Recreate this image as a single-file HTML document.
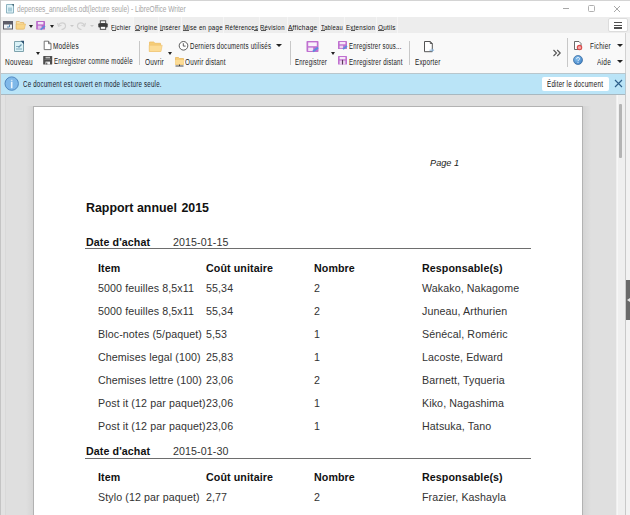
<!DOCTYPE html>
<html><head><meta charset="utf-8">
<style>
*{margin:0;padding:0;box-sizing:border-box}
html,body{width:630px;height:515px;overflow:hidden;background:#f0f0f0;font-family:"Liberation Sans",sans-serif}
.a{position:absolute;white-space:nowrap}
.ui{font-size:8.4px;color:#222;line-height:10px;transform-origin:0 0;letter-spacing:0.3px}
.doc{font-size:10.67px;color:#333;line-height:12px;letter-spacing:0.1px}
.b{font-weight:bold;color:#111}
</style></head><body>
<!-- window frame -->
<div class="a" style="left:0;top:0;width:630px;height:515px;background:#f0f0f0"></div>
<!-- title bar -->
<div class="a" style="left:0;top:0;width:630px;height:17px;background:#ffffff"></div>
<div class="a" style="left:0;top:0;width:630px;height:1px;background:#d4d4d4"></div>
<div class="a" style="left:0;top:0;width:1px;height:515px;background:#c4c4c4"></div>
<svg class="a" style="left:5px;top:3px" width="10" height="11" viewBox="0 0 10 11"><path d="M1.5 1.5h5.5l1.5 1.5v7h-7z" fill="#dff2f8" stroke="#8db3c0" stroke-width="1"/><rect x="3" y="4.5" width="4" height="4" fill="#a9cdd9"/><path d="M6.5 1h2.5v2.5z" fill="#4d6f7d"/></svg>
<div class="a" style="left:17px;top:3.6px;font-size:8.4px;color:#a6a6a6;line-height:10px;transform:scaleX(0.78);transform-origin:0 0">depenses_annuelles.odt(lecture seule) - LibreOffice Writer</div>
<!-- window controls -->
<div class="a" style="left:563px;top:8px;width:6px;height:1px;background:#a8a8a8"></div>
<div class="a" style="left:588px;top:5px;width:7px;height:7px;border:1px solid #b0b0b0;border-radius:1.5px"></div>
<svg class="a" style="left:613px;top:5px" width="8" height="8" viewBox="0 0 8 8"><path d="M1 1l6 6M7 1l-6 6" stroke="#a8a8a8" stroke-width="1"/></svg>

<!-- menubar -->
<div class="a" style="left:1px;top:17px;width:629px;height:16px;background:#ededed"></div>
<div class="a" style="left:109px;top:17px;width:25px;height:16px;background:#f3f3f3"></div>
<!-- quick icons -->
<svg class="a" style="left:3px;top:21px" width="10" height="9" viewBox="0 0 10 9"><rect x="0.5" y="0.5" width="9" height="7.5" fill="#eef3f6" stroke="#5d5d68"/><rect x="0.5" y="0.5" width="9" height="3" fill="#5d5d68"/><path d="M6.5 3.5v2.5h-2.5" stroke="#5a86b0" stroke-width="1" fill="none"/></svg>
<svg class="a" style="left:15px;top:20px" width="11" height="10" viewBox="0 0 11 10"><path d="M1.3 1.5h3l1 1h3.4v6.5h-7.4z" fill="#f9e2aa" stroke="#e2b466" stroke-width="0.8"/><path d="M1.2 4h9.3l-1.2 5h-8.1z" fill="#f9d68a" stroke="#e6b868" stroke-width="0.6"/></svg>
<div class="a" style="left:29px;top:25px;border-left:2.5px solid transparent;border-right:2.5px solid transparent;border-top:3px solid #222"></div>
<svg class="a" style="left:36px;top:21px" width="10" height="10" viewBox="0 0 10 10"><rect x="0.2" y="0" width="8.8" height="8.6" rx="0.6" fill="#b865c8"/><rect x="1.8" y="1" width="5.6" height="2.4" fill="#f4e2f7"/><rect x="1.8" y="4.6" width="3.8" height="3.2" fill="#e2c2ea"/><path d="M4.6 8.6l4.4-3.6" stroke="#5a8fdc" stroke-width="1.6"/></svg>
<div class="a" style="left:49.5px;top:25px;border-left:2.5px solid transparent;border-right:2.5px solid transparent;border-top:3px solid #222"></div>
<svg class="a" style="left:57px;top:21px" width="10" height="9" viewBox="0 0 10 9"><path d="M1.5 4.5C3 1 8 1 8.5 4.5 8.8 6.5 7 8.5 4.5 8.5" stroke="#d0d0d0" fill="none" stroke-width="1.2"/><path d="M0.5 2l1 3.2 3-1" stroke="#d0d0d0" fill="none" stroke-width="1.2"/></svg>
<div class="a" style="left:70px;top:25px;border-left:2.5px solid transparent;border-right:2.5px solid transparent;border-top:2.5px solid #c8c8c8"></div>
<svg class="a" style="left:76px;top:21px" width="10" height="9" viewBox="0 0 10 9"><path d="M8.5 4.5C7 1 2 1 1.5 4.5 1.2 6.5 3 8.5 5.5 8.5" stroke="#d0d0d0" fill="none" stroke-width="1.2"/><path d="M9.5 2l-1 3.2-3-1" stroke="#d0d0d0" fill="none" stroke-width="1.2"/></svg>
<div class="a" style="left:90px;top:25px;border-left:2.5px solid transparent;border-right:2.5px solid transparent;border-top:2.5px solid #c8c8c8"></div>
<svg class="a" style="left:98px;top:20px" width="10" height="10" viewBox="0 0 10 10"><rect x="2.3" y="0.8" width="5.4" height="2.6" fill="#fff" stroke="#444" stroke-width="0.9"/><rect x="0.3" y="3.2" width="9.4" height="4.3" rx="1" fill="#3c3c3c"/><rect x="2.3" y="6.3" width="5.4" height="3" fill="#fff" stroke="#3c3c3c" stroke-width="0.9"/></svg>
<div class="a" style="left:133px;top:17px;width:1px;height:16px;background:#f5f5f5"></div>
<div class="a" style="left:158px;top:17px;width:1px;height:16px;background:#f5f5f5"></div>
<div class="a" style="left:181px;top:17px;width:1px;height:16px;background:#f5f5f5"></div>
<div class="a" style="left:223px;top:17px;width:1px;height:16px;background:#f5f5f5"></div>
<div class="a" style="left:259px;top:17px;width:1px;height:16px;background:#f5f5f5"></div>
<div class="a" style="left:287px;top:17px;width:1px;height:16px;background:#f5f5f5"></div>
<div class="a" style="left:319px;top:17px;width:1px;height:16px;background:#f5f5f5"></div>
<div class="a" style="left:344px;top:17px;width:1px;height:16px;background:#f5f5f5"></div>
<div class="a" style="left:376px;top:17px;width:1px;height:16px;background:#f5f5f5"></div>
<div class="a" style="left:397px;top:17px;width:1px;height:16px;background:#f5f5f5"></div>
<!-- menu texts -->
<div class="a ui" style="left:111.10px;top:22.57px;color:#111;transform:scaleX(0.797);font-size:7.6px">Fichier</div>
<div class="a ui" style="left:134.69px;top:22.57px;color:#111;transform:scaleX(0.848);font-size:7.6px">Origine</div>
<div class="a ui" style="left:159.64px;top:22.57px;color:#111;transform:scaleX(0.792);font-size:7.6px">Insérer</div>
<div class="a ui" style="left:182.50px;top:22.57px;color:#111;transform:scaleX(0.809);font-size:7.6px">Mise en page</div>
<div class="a ui" style="left:225.10px;top:22.57px;color:#111;transform:scaleX(0.794);font-size:7.6px">Références</div>
<div class="a ui" style="left:260.41px;top:22.57px;color:#111;transform:scaleX(0.783);font-size:7.6px">Révision</div>
<div class="a ui" style="left:288.29px;top:22.57px;color:#111;transform:scaleX(0.860);font-size:7.6px">Affichage</div>
<div class="a ui" style="left:320.67px;top:22.57px;color:#111;transform:scaleX(0.763);font-size:7.6px">Tableau</div>
<div class="a ui" style="left:345.90px;top:22.57px;color:#111;transform:scaleX(0.808);font-size:7.6px">Extension</div>
<div class="a ui" style="left:377.90px;top:22.57px;color:#111;transform:scaleX(0.838);font-size:7.6px">Outils</div>
<div class="a" style="left:111.6px;top:29.6px;width:4px;height:1px;background:#555"></div>
<div class="a" style="left:135px;top:29.6px;width:5px;height:1px;background:#555"></div>
<div class="a" style="left:160.2px;top:29.6px;width:2.5px;height:1px;background:#555"></div>
<div class="a" style="left:183px;top:29.6px;width:6px;height:1px;background:#555"></div>
<div class="a" style="left:254px;top:29.6px;width:4px;height:1px;background:#555"></div>
<div class="a" style="left:260.9px;top:29.6px;width:5px;height:1px;background:#555"></div>
<div class="a" style="left:288.3px;top:29.6px;width:5px;height:1px;background:#555"></div>
<div class="a" style="left:350.5px;top:29.6px;width:4px;height:1px;background:#555"></div>
<div class="a" style="left:320.8px;top:29.6px;width:4.5px;height:1px;background:#555"></div>
<div class="a" style="left:378.2px;top:29.6px;width:5.5px;height:1px;background:#555"></div>
<div class="a" style="left:591px;top:49px;width:4px;height:1px;background:#555"></div>
<div class="a" style="left:597.5px;top:65px;width:5px;height:1px;background:#555"></div>
<!-- hamburger -->
<div class="a" style="left:608px;top:18px;width:20px;height:14px;background:#fff;border:1px solid #dcdcdc;border-radius:2px"></div>
<div class="a" style="left:614px;top:22px;width:8px;height:1.2px;background:#505050"></div>
<div class="a" style="left:614px;top:24.7px;width:8px;height:1.2px;background:#505050"></div>
<div class="a" style="left:614px;top:27.4px;width:8px;height:1.2px;background:#505050"></div>

<!-- toolbar -->
<div class="a" style="left:1px;top:33px;width:624px;height:40px;background:#f9f9f9"></div>
<div class="a" style="left:626px;top:33px;width:4px;height:62px;background:#f3f3f3"></div>
<div class="a" style="left:1px;top:73px;width:625px;height:1px;background:#b9c6cc"></div>
<div class="a" style="left:625px;top:33px;width:1px;height:62px;background:#d2d2d2"></div>
<!-- Nouveau -->
<svg class="a" style="left:13px;top:40px" width="12" height="13" viewBox="0 0 12 13"><path d="M1.5 1.5h7.5l1.5 1.5v8.5h-9z" fill="#daf2f7" stroke="#7ea3ad" stroke-width="1"/><path d="M3 6.5h3M3 9h6" stroke="#7fa8bb" stroke-width="1.1"/><path d="M5.5 7.5l3-3" stroke="#6a95b0" stroke-width="1.3"/><path d="M7.5 0.8h3.5v3.5z" fill="#2f5474"/></svg>
<div class="a ui" style="left:5.0px;top:56.90px;color:#222;transform:scaleX(0.781)">Nouveau</div>
<div class="a" style="left:36px;top:52px;border-left:2.5px solid transparent;border-right:2.5px solid transparent;border-top:3px solid #222"></div>
<svg class="a" style="left:43px;top:40px" width="9" height="11" viewBox="0 0 9 11"><path d="M1.2 1.2h4.3l2.5 2.5v5.9h-6.8z" fill="#fff" stroke="#666" stroke-width="0.9"/><path d="M5.5 1.2v2.5h2.5" fill="none" stroke="#666" stroke-width="0.9"/></svg>
<div class="a ui" style="left:53.47px;top:41.23px;color:#222;transform:scaleX(0.765)">Modèles</div>
<svg class="a" style="left:43px;top:55px" width="10" height="10" viewBox="0 0 10 10"><rect x="0.2" y="1" width="9" height="8.5" rx="0.6" fill="#4c4c4c"/><rect x="2.5" y="1.8" width="4.5" height="1.6" fill="#bdbdbd"/><rect x="1.5" y="4.2" width="6.5" height="0.8" fill="#7a7a7a"/><rect x="2.5" y="6.6" width="4.5" height="2.9" fill="#f4f4f4"/><rect x="3.2" y="7.6" width="1.1" height="1.9" fill="#4c4c4c"/></svg>
<div class="a ui" style="left:53.50px;top:56.40px;color:#222;transform:scaleX(0.731)">Enregistrer comme modèle</div>
<div class="a" style="left:139px;top:41px;width:1px;height:24px;background:#c8c8c8"></div>
<!-- Ouvrir -->
<svg class="a" style="left:148px;top:40px" width="15" height="12" viewBox="0 0 15 12"><path d="M1.5 2h4.2l1.3 1.3h5.5v8h-11z" fill="#f6cd78" stroke="#ecbf68" stroke-width="0.8"/><path d="M1.2 5.2h13l-1.2 6.3h-11.8z" fill="#fcdc96" stroke="#f0c474" stroke-width="0.6"/></svg>
<div class="a ui" style="left:145.09px;top:56.90px;color:#222;transform:scaleX(0.772)">Ouvrir</div>
<div class="a" style="left:168px;top:52px;border-left:2.5px solid transparent;border-right:2.5px solid transparent;border-top:3px solid #222"></div>
<svg class="a" style="left:178px;top:40px" width="11" height="11" viewBox="0 0 11 11"><circle cx="5.5" cy="5.8" r="4.3" fill="#fff" stroke="#4a4a4a" stroke-width="0.9"/><path d="M5.3 3.2v2.9h2.3" stroke="#4a4a4a" stroke-width="0.9" fill="none"/></svg>
<div class="a ui" style="left:190.00px;top:40.99px;color:#222;transform:scaleX(0.732)">Derniers documents utilisés</div>
<div class="a" style="left:276px;top:44px;border-left:3px solid transparent;border-right:3px solid transparent;border-top:3.5px solid #222"></div>
<svg class="a" style="left:174px;top:56px" width="11" height="11" viewBox="0 0 11 11"><path d="M1.5 1.5h3l1 1h4v6h-8z" fill="#f6cd78" stroke="#e8b860" stroke-width="0.8"/><path d="M1.2 4h9.3l-0.9 4.5h-8.4z" fill="#fcdc96"/><path d="M5.5 8.5v1.5M1.5 10h8" stroke="#333" stroke-width="0.9"/></svg>
<div class="a ui" style="left:185.40px;top:56.90px;color:#222;transform:scaleX(0.755)">Ouvrir distant</div>
<div class="a" style="left:290px;top:41px;width:1px;height:24px;background:#c8c8c8"></div>
<!-- Enregistrer -->
<svg class="a" style="left:305px;top:40px" width="15" height="13" viewBox="0 0 15 13"><rect x="1.5" y="1" width="12" height="11" rx="0.8" fill="#c070d0"/><rect x="3.2" y="2.4" width="8.6" height="3.8" fill="#fbf2fc"/><rect x="3.2" y="7.6" width="5" height="3.4" fill="#f4e4f7"/><path d="M8 11.5l5-4" stroke="#5a8fdc" stroke-width="2"/></svg>
<div class="a ui" style="left:295.20px;top:56.90px;color:#222;transform:scaleX(0.724)">Enregistrer</div>
<div class="a" style="left:331px;top:52px;border-left:2.5px solid transparent;border-right:2.5px solid transparent;border-top:3px solid #222"></div>
<svg class="a" style="left:338px;top:41px" width="10" height="9" viewBox="0 0 10 9"><rect x="0" y="0" width="9" height="8" rx="0.6" fill="#c070d0"/><rect x="1.6" y="1" width="5.8" height="2.3" fill="#f6e6f8"/><rect x="1.6" y="4.6" width="3.5" height="2.6" fill="#ecd6f0"/><path d="M5 8l4-3" stroke="#5a8fdc" stroke-width="1.6"/></svg>
<div class="a ui" style="left:348.51px;top:40.99px;color:#222;transform:scaleX(0.714)">Enregistrer sous...</div>
<svg class="a" style="left:338px;top:56px" width="10" height="9" viewBox="0 0 10 9"><rect x="0" y="0" width="9" height="8.5" rx="0.6" fill="#c070d0"/><rect x="1.6" y="1" width="5.8" height="2.3" fill="#f6e6f8"/><rect x="1.6" y="4.6" width="5.8" height="3.9" fill="#ecd6f0"/><path d="M4.5 3.8v4.7" stroke="#5a3a5a" stroke-width="1.1"/></svg>
<div class="a ui" style="left:348.50px;top:56.90px;color:#222;transform:scaleX(0.728)">Enregistrer distant</div>
<div class="a" style="left:409px;top:41px;width:1px;height:24px;background:#c8c8c8"></div>
<!-- Exporter -->
<svg class="a" style="left:423px;top:40px" width="13" height="13" viewBox="0 0 13 13"><path d="M1.5 1.5h5.8l2 2v8.2h-7.8z" fill="#fff" stroke="#555" stroke-width="1"/><path d="M7.3 1.5v2h2" fill="none" stroke="#555" stroke-width="1"/><path d="M6.5 10.2h3.8M9 8.6l1.6 1.6-1.6 1.6" stroke="#8cb8e0" stroke-width="1" fill="none"/></svg>
<div class="a ui" style="left:415.08px;top:56.90px;color:#222;transform:scaleX(0.751)">Exporter</div>
<!-- >> -->
<svg class="a" style="left:552px;top:49px" width="10" height="8" viewBox="0 0 10 8"><path d="M1.5 1l3 3-3 3M5.2 1l3 3-3 3" stroke="#585858" stroke-width="1.15" fill="none"/></svg>
<div class="a" style="left:567px;top:38px;width:1px;height:29px;background:#c8c8c8"></div>
<svg class="a" style="left:573px;top:40px" width="10" height="11" viewBox="0 0 10 11"><path d="M1.5 1.5h4.5l2 2v6h-6.5z" fill="#fff" stroke="#5a5a5a" stroke-width="0.9"/><circle cx="6.5" cy="7.6" r="2.2" fill="#f4a8a8" stroke="#dc4c4c" stroke-width="1.1"/></svg>
<div class="a ui" style="left:590.47px;top:40.99px;color:#222;transform:scaleX(0.764)">Fichier</div>
<div class="a" style="left:617px;top:44px;border-left:3px solid transparent;border-right:3px solid transparent;border-top:3.5px solid #222"></div>
<svg class="a" style="left:573px;top:55px" width="10" height="10" viewBox="0 0 10 10"><defs><radialGradient id="hg" cx="0.4" cy="0.35" r="0.7"><stop offset="0" stop-color="#8cc4f0"/><stop offset="1" stop-color="#3d7fc4"/></radialGradient></defs><circle cx="5" cy="5" r="4.5" fill="url(#hg)" stroke="#35679c" stroke-width="0.7"/><path d="M3.6 3.8a1.5 1.4 0 1 1 2.2 1.2c-0.6 0.4-0.8 0.6-0.8 1.2" stroke="#e6f2ff" stroke-width="1" fill="none"/><circle cx="5" cy="7.6" r="0.55" fill="#e6f2ff"/></svg>
<div class="a ui" style="left:597.49px;top:56.90px;color:#222;transform:scaleX(0.779)">Aide</div>
<div class="a" style="left:617px;top:60px;border-left:3px solid transparent;border-right:3px solid transparent;border-top:3.5px solid #222"></div>

<!-- infobar -->
<div class="a" style="left:1px;top:74px;width:625px;height:20px;background:#bae4f7"></div>
<div class="a" style="left:1px;top:94px;width:625px;height:1px;background:#a8b8c0"></div>
<div class="a" style="left:625px;top:73px;width:1px;height:22px;background:#b8c8d0"></div>
<svg class="a" style="left:3.5px;top:76px" width="16" height="16" viewBox="0 0 16 16"><circle cx="7.7" cy="7.6" r="6.7" fill="#80b9e9" stroke="#5088c0" stroke-width="1"/><rect x="6.9" y="5.8" width="1.6" height="6.4" fill="#eef6fd"/><rect x="6.9" y="3.8" width="1.6" height="1.3" fill="#cfe4f7"/></svg>
<div class="a ui" style="left:23.09px;top:79.29px;color:#14202c;transform:scaleX(0.732)">Ce document est ouvert en mode lecture seule.</div>
<div class="a" style="left:542px;top:77px;width:67px;height:14px;background:#fff;border-radius:2px"></div>
<div class="a ui" style="left:547.29px;top:79.49px;color:#111;transform:scaleX(0.746)">Éditer le document</div>
<svg class="a" style="left:614px;top:79px" width="9" height="9" viewBox="0 0 9 9"><path d="M1 1l7 7M8 1l-7 7" stroke="#2d5f8a" stroke-width="1.15"/></svg>

<!-- document area -->
<div class="a" style="left:1px;top:95px;width:615px;height:420px;background:#dfdfdf"></div>
<div class="a" style="left:1px;top:95px;width:4px;height:420px;background:#e2e2e2"></div>
<div class="a" style="left:5px;top:95px;width:1px;height:420px;background:#d9d9d9"></div>
<div class="a" style="left:616px;top:95px;width:9px;height:420px;background:#efefef"></div>
<div class="a" style="left:617px;top:95px;width:1px;height:420px;background:#f7f7f7"></div>
<div class="a" style="left:619px;top:104px;width:3px;height:54px;background:#b4b4b4;border-radius:1px"></div>
<div class="a" style="left:625px;top:95px;width:1px;height:420px;background:#c9c9c9"></div>
<div class="a" style="left:626px;top:95px;width:4px;height:420px;background:#f2f2f2"></div>
<div class="a" style="left:626px;top:280px;width:4px;height:40px;background:#6a6a6a"></div>
<div class="a" style="left:627px;top:297.5px;border-top:2.5px solid transparent;border-bottom:2.5px solid transparent;border-right:3px solid #e8e8e8"></div>
<!-- page -->
<div class="a" style="left:26px;top:106px;width:8px;height:409px;background:linear-gradient(to right,rgba(0,0,0,0),rgba(0,0,0,0.05))"></div>
<div class="a" style="left:583px;top:106px;width:8px;height:409px;background:linear-gradient(to left,rgba(0,0,0,0),rgba(0,0,0,0.05))"></div>
<div class="a" style="left:33px;top:106px;width:550px;height:409px;background:#b2b2b2"></div>
<div class="a" style="left:34px;top:107px;width:548px;height:408px;background:#ffffff"></div>

<!-- page content -->
<div class="a" style="left:430px;top:157.7px;font-size:9.2px;font-style:italic;color:#222;line-height:11px">Page 1</div>
<div class="a b" style="left:86px;top:201.2px;font-size:12.4px;line-height:14px">Rapport annuel</div>
<div class="a b" style="left:181.4px;top:201.2px;font-size:12.4px;line-height:14px">2015</div>

<div class="a doc b" style="left:86px;top:236px;font-size:10.67px">Date d'achat</div>
<div class="a doc" style="left:173px;top:236px">2015-01-15</div>
<div class="a" style="left:85px;top:248px;width:446px;height:1px;background:#6e6e6e"></div>

<div class="a doc b" style="left:98px;top:262px;font-size:10.67px">Item</div>
<div class="a doc b" style="left:206px;top:262px;font-size:10.67px">Coût unitaire</div>
<div class="a doc b" style="left:314px;top:262px;font-size:10.67px">Nombre</div>
<div class="a doc b" style="left:422px;top:262px;font-size:10.67px">Responsable(s)</div>

<div class="a doc" style="left:98px;top:282px">5000 feuilles 8,5x11</div>
<div class="a doc" style="left:206px;top:282px">55,34</div>
<div class="a doc" style="left:314px;top:282px">2</div>
<div class="a doc" style="left:422px;top:282px">Wakako, Nakagome</div>

<div class="a doc" style="left:98px;top:305px">5000 feuilles 8,5x11</div>
<div class="a doc" style="left:206px;top:305px">55,34</div>
<div class="a doc" style="left:314px;top:305px">2</div>
<div class="a doc" style="left:422px;top:305px">Juneau, Arthurien</div>

<div class="a doc" style="left:98px;top:328px">Bloc-notes (5/paquet)</div>
<div class="a doc" style="left:206px;top:328px">5,53</div>
<div class="a doc" style="left:314px;top:328px">1</div>
<div class="a doc" style="left:422px;top:328px">Sénécal, Roméric</div>

<div class="a doc" style="left:98px;top:351px">Chemises legal (100)</div>
<div class="a doc" style="left:206px;top:351px">25,83</div>
<div class="a doc" style="left:314px;top:351px">1</div>
<div class="a doc" style="left:422px;top:351px">Lacoste, Edward</div>

<div class="a doc" style="left:98px;top:374px">Chemises lettre (100)</div>
<div class="a doc" style="left:206px;top:374px">23,06</div>
<div class="a doc" style="left:314px;top:374px">2</div>
<div class="a doc" style="left:422px;top:374px">Barnett, Tyqueria</div>

<div class="a doc" style="left:98px;top:397px">Post it (12 par paquet)</div>
<div class="a doc" style="left:206px;top:397px">23,06</div>
<div class="a doc" style="left:314px;top:397px">1</div>
<div class="a doc" style="left:422px;top:397px">Kiko, Nagashima</div>

<div class="a doc" style="left:98px;top:420px">Post it (12 par paquet)</div>
<div class="a doc" style="left:206px;top:420px">23,06</div>
<div class="a doc" style="left:314px;top:420px">1</div>
<div class="a doc" style="left:422px;top:420px">Hatsuka, Tano</div>

<div class="a doc b" style="left:86px;top:445px;font-size:10.67px">Date d'achat</div>
<div class="a doc" style="left:173px;top:445px">2015-01-30</div>
<div class="a" style="left:85px;top:458px;width:446px;height:1px;background:#6e6e6e"></div>

<div class="a doc b" style="left:98px;top:471px;font-size:10.67px">Item</div>
<div class="a doc b" style="left:206px;top:471px;font-size:10.67px">Coût unitaire</div>
<div class="a doc b" style="left:314px;top:471px;font-size:10.67px">Nombre</div>
<div class="a doc b" style="left:422px;top:471px;font-size:10.67px">Responsable(s)</div>

<div class="a doc" style="left:98px;top:491px">Stylo (12 par paquet)</div>
<div class="a doc" style="left:206px;top:491px">2,77</div>
<div class="a doc" style="left:314px;top:491px">2</div>
<div class="a doc" style="left:422px;top:491px">Frazier, Kashayla</div>
</body></html>
